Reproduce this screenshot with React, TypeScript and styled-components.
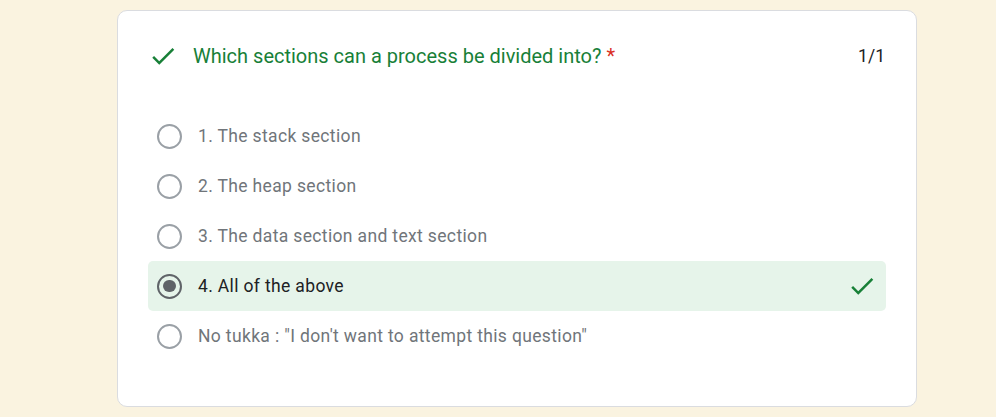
import React from "react";
import styled, { createGlobalStyle } from "styled-components";

const Global = createGlobalStyle`
  html, body { margin: 0; padding: 0; background: #faf3e0; }
  body { font-family: Roboto, "Noto Sans", Arial, sans-serif; }
`;

const Page = styled.div`
  padding: 10px 0 10px 117px;
`;

const Card = styled.div`
  width: 800px;
  box-sizing: border-box;
  background: #fff;
  border: 1px solid #dadce0;
  border-radius: 10px;
  padding: 30px 30px 45px 30px;
`;

const Header = styled.div`
  display: flex;
  align-items: center;
  height: 30px;
`;

const Title = styled.div`
  flex: 1;
  margin-left: 15px;
  font-size: 20px;
  color: #188038;
  line-height: 30px;
`;

const Star = styled.span`
  color: #d93025;
  margin-left: 5px;
`;

const Score = styled.div`
  font-size: 17.5px;
  color: #202124;
  margin-right: 1px;
`;

const Options = styled.div`
  display: flex;
  flex-direction: column;
  margin-top: 40px;
`;

const Row = styled.div<{ $selected?: boolean }>`
  display: flex;
  align-items: center;
  height: 50px;
  padding: 0 9px;
  border-radius: 5px;
  background: ${(p) => (p.$selected ? "#e6f4ea" : "transparent")};
`;

const Radio = styled.span<{ $selected?: boolean }>`
  width: 25px;
  height: 25px;
  box-sizing: border-box;
  border-radius: 50%;
  border: 2.5px solid ${(p) => (p.$selected ? "#5f6368" : "#9aa0a6")};
  display: flex;
  align-items: center;
  justify-content: center;
  flex-shrink: 0;
`;

const Dot = styled.span`
  width: 12.5px;
  height: 12.5px;
  border-radius: 50%;
  background: #5f6368;
`;

const Label = styled.span<{ $selected?: boolean }>`
  flex: 1;
  margin-left: 16px;
  font-size: 17.5px;
  letter-spacing: 0.35px;
  color: ${(p) => (p.$selected ? "#202124" : "#70757a")};
`;

const Check = () => (
  <svg width="30" height="30" viewBox="0 0 24 24" fill="#188038">
    <path d="M9 16.17L4.83 12l-1.42 1.41L9 19 21 7l-1.41-1.41z" />
  </svg>
);

const options = [
  "1. The stack section",
  "2. The heap section",
  "3. The data section and text section",
  "4. All of the above",
  'No tukka : "I don\'t want to attempt this question"',
];

export default function App() {
  return (
    <>
      <Global />
      <Page>
        <Card>
          <Header>
            <Check />
            <Title>
              Which sections can a process be divided into?<Star>*</Star>
            </Title>
            <Score>1/1</Score>
          </Header>
          <Options>
            {options.map((o, i) => {
              const sel = i === 3;
              return (
                <Row key={i} $selected={sel}>
                  <Radio $selected={sel}>{sel && <Dot />}</Radio>
                  <Label $selected={sel}>{o}</Label>
                  {sel && <Check />}
                </Row>
              );
            })}
          </Options>
        </Card>
      </Page>
    </>
  );
}
